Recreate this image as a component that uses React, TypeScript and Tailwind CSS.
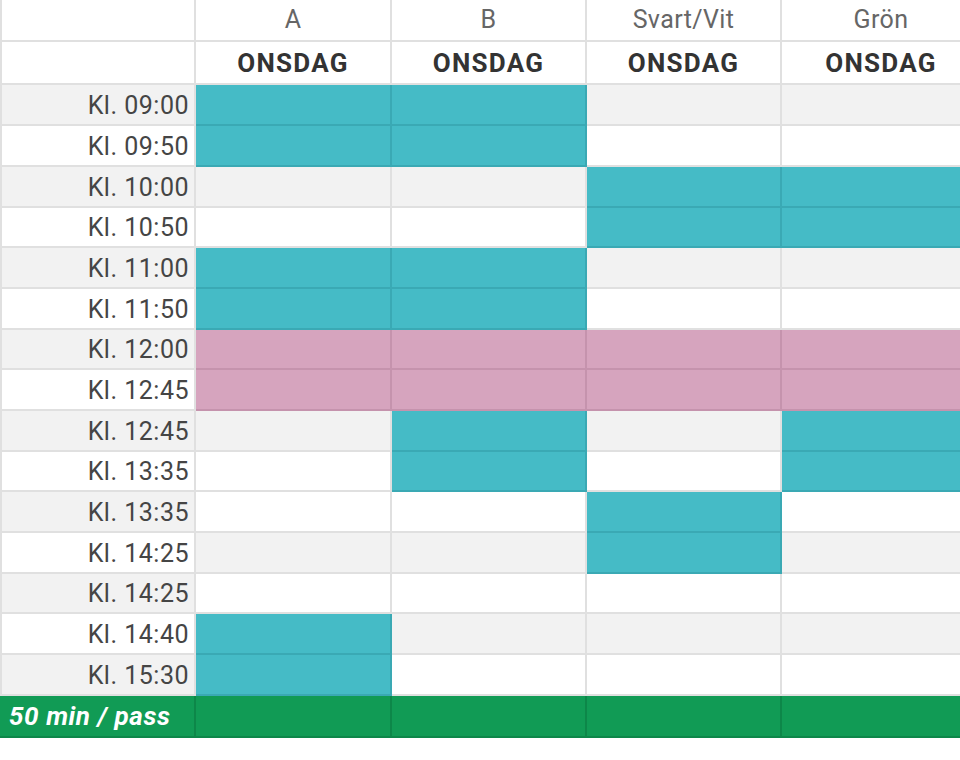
import React from "react";

type C = "t" | "p" | "g" | "n";

const rows: { label: string; h: number; lg: boolean; cg: boolean; cells: C[] }[] = [
  { label: "Kl. 09:00", h: 41, lg: true, cg: true, cells: ["t", "t", "n", "n"] },
  { label: "Kl. 09:50", h: 41, lg: false, cg: false, cells: ["t", "t", "n", "n"] },
  { label: "Kl. 10:00", h: 41, lg: true, cg: true, cells: ["n", "n", "t", "t"] },
  { label: "Kl. 10:50", h: 40, lg: false, cg: false, cells: ["n", "n", "t", "t"] },
  { label: "Kl. 11:00", h: 41, lg: true, cg: true, cells: ["t", "t", "n", "n"] },
  { label: "Kl. 11:50", h: 41, lg: false, cg: false, cells: ["t", "t", "n", "n"] },
  { label: "Kl. 12:00", h: 40, lg: true, cg: true, cells: ["p", "p", "p", "p"] },
  { label: "Kl. 12:45", h: 41, lg: false, cg: false, cells: ["p", "p", "p", "p"] },
  { label: "Kl. 12:45", h: 41, lg: true, cg: true, cells: ["n", "t", "n", "t"] },
  { label: "Kl. 13:35", h: 40, lg: false, cg: false, cells: ["n", "t", "n", "t"] },
  { label: "Kl. 13:35", h: 41, lg: true, cg: false, cells: ["n", "n", "t", "n"] },
  { label: "Kl. 14:25", h: 41, lg: false, cg: true, cells: ["n", "n", "t", "n"] },
  { label: "Kl. 14:25", h: 40, lg: true, cg: false, cells: ["n", "n", "n", "n"] },
  { label: "Kl. 14:40", h: 41, lg: false, cg: true, cells: ["t", "n", "n", "n"] },
  { label: "Kl. 15:30", h: 41, lg: true, cg: false, cells: ["t", "n", "n", "n"] },
];

const widths = ["w-[196px]", "w-[195px]", "w-[195px]", "w-[200px]"];
const heads = ["A", "B", "Svart/Vit", "Grön"];

function cellClass(c: C, gray: boolean) {
  if (c === "t") return "bg-[#45bbc6] border-[#3aa9b4]";
  if (c === "p") return "bg-[#d6a4be] border-[#c593ad]";
  if (c === "g") return "bg-[#119b55] border-[#0d8749]";
  return (gray ? "bg-[#f2f2f2]" : "bg-white") + " border-[#e0e0e0]";
}

export default function App() {
  return (
    <div
      className="w-[960px] h-[760px] overflow-hidden bg-white"
      style={{ fontFamily: "Roboto, 'Noto Sans', sans-serif" }}
    >
      <div className="w-[1000px] flex flex-col">
        {/* header 1 */}
        <div className="flex h-[42px]">
          <div className="w-[196px] shrink-0 border-l-2 border-r-2 border-b-2 border-[#e0e0e0]" />
          {heads.map((h, i) => (
            <div
              key={i}
              className={`${widths[i]} shrink-0 border-r-2 border-b-2 border-[#e0e0e0] flex items-center justify-center text-[25px] tracking-[0.4px] text-[#666666]`}
            >
              {h}
            </div>
          ))}
        </div>
        {/* header 2 */}
        <div className="flex h-[43px]">
          <div className="w-[196px] shrink-0 border-l-2 border-r-2 border-b-2 border-[#e0e0e0]" />
          {heads.map((_, i) => (
            <div
              key={i}
              className={`${widths[i]} shrink-0 border-r-2 border-b-2 border-[#e0e0e0] flex items-center justify-center pt-[2px] text-[26px] font-bold text-[#333333] tracking-[1.3px]`}
            >
              ONSDAG
            </div>
          ))}
        </div>
        {rows.map((r, ri) => (
          <div key={ri} className="flex" style={{ height: r.h }}>
            <div
              className={`w-[196px] shrink-0 border-l-2 border-r-2 border-b-2 border-[#e0e0e0] flex items-center justify-end pt-[2px] pr-[5px] text-[25px] tracking-[0.5px] text-[#454545] ${
                r.lg ? "bg-[#f2f2f2]" : "bg-white"
              }`}
            >
              {r.label}
            </div>
            {r.cells.map((c, ci) => (
              <div key={ci} className={`${widths[ci]} shrink-0 border-r-2 border-b-2 ${cellClass(c, r.cg)}`} />
            ))}
          </div>
        ))}
        {/* footer */}
        <div className="flex h-[42px]">
          <div className="w-[196px] shrink-0 border-r-2 border-b-2 bg-[#119b55] border-[#0d8749] flex items-center pl-[9px] text-[26px] tracking-[0.6px] font-bold italic text-white">
            50 min / pass
          </div>
          {widths.map((w, i) => (
            <div key={i} className={`${w} shrink-0 border-r-2 border-b-2 ${cellClass("g", false)}`} />
          ))}
        </div>
      </div>
    </div>
  );
}
